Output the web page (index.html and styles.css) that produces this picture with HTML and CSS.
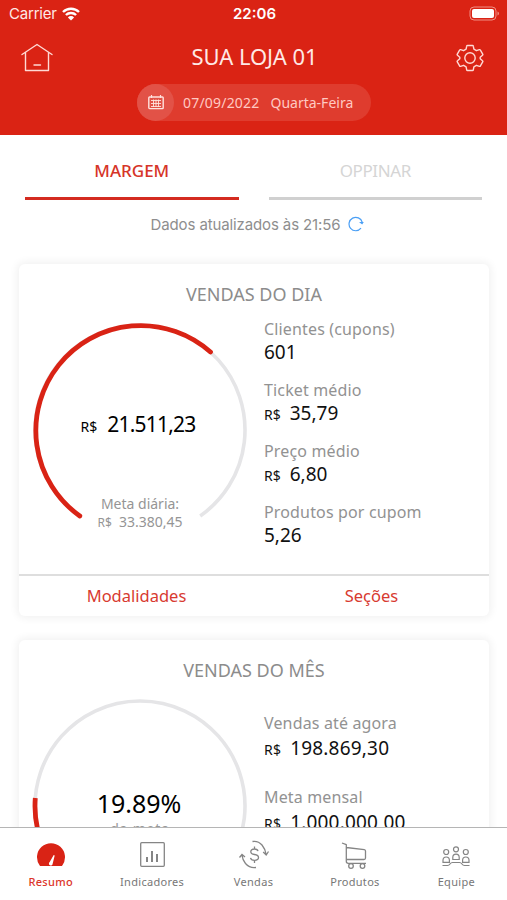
FILE: index.html
```
<!DOCTYPE html>
<html lang="pt-BR">
<head>
	<meta charset="UTF-8">
	<title>Resumo</title>
	<link rel="stylesheet" href="styles.css">
</head>
<body>
	<div id="app">
		<header>
			<div class="status">
				<div class="carrier">
					<span>Carrier</span>
					<svg width="18" height="14" viewBox="0 0 18 14" fill="none" stroke="#fff" stroke-width="2.4">
						<path d="M1 5a11.5 11.5 0 0 1 16 0"/>
						<path d="M3.9 8a7.4 7.4 0 0 1 10.2 0"/>
						<path d="M9 13.6L5.9 10.4a4.4 4.4 0 0 1 6.2 0z" fill="#fff" stroke="none"/>
					</svg>
				</div>
				<b class="clock">22:06</b>
				<svg class="battery" width="31" height="15" viewBox="0 0 31 15">
					<rect x="1" y="1" width="26" height="13" rx="4" fill="none" stroke="#f08f84"/>
					<rect x="3" y="3" width="22" height="9" rx="2" fill="#fff"/>
					<path d="M28.5 5.5v4q1.5-.6 1.5-2t-1.5-2z" fill="#f08f84"/>
				</svg>
			</div>
			<div class="title">
				<svg width="32" height="29" viewBox="0 0 32 29" fill="none" stroke="#ffd9d4" stroke-width="1.4" stroke-linejoin="round" stroke-linecap="round">
					<path d="M1 11.5L16 1.500l15 10M4.500 9.500v18h23v-18M13 22h6.500"/>
				</svg>
				<h1>SUA LOJA 01</h1>
				<svg width="28" height="28" viewBox="0 0 28 28" fill="none" stroke="#ffd9d4" stroke-width="1.4" stroke-linejoin="round">
					<circle cx="14" cy="14" r="5.2"/>
					<path d="M11.500 1.500h5q.7 0 .8.700l.6 3 2.500 1.500 3-1q.7-.2 1 .4l2.300 4q.4.700-.2 1.100l-2.300 2v1.600l2.300 2q.6.400.2 1.100l-2.300 4q-.3.600-1 .4l-3-1-2.500 1.500-.6 3q-.1.700-.8.700h-5q-.7 0-.8-.7l-.6-3-2.500-1.500-3 1q-.7.200-1-.4l-2.300-4q-.4-.7.200-1.100l2.300-2v-1.600l-2.300-2q-.6-.4-.2-1.100l2.300-4q.3-.6 1-.4l3 1 2.500-1.500.6-3q.1-.7.8-.7z"/>
				</svg>
			</div>
			<div class="date">
				<span class="cal">
					<svg width="16" height="15" viewBox="0 0 16 15" fill="none" stroke="#ffe2de">
						<rect x=".8" y="2" width="14.4" height="11.6" rx=".8" stroke-width="1.4"/>
						<path d="M3.500 0v3M12.500 0v3" stroke-width="1.2"/>
						<path d="M3 5.500h10M3 8.500h10M3 11.500h10M5.500 4.500v7.500M8 4.500v7.500M10.500 4.500v7.500" stroke-width=".9"/>
					</svg>
				</span>
				<span>07/09/2022</span>
				<span class="week">Quarta-Feira</span>
			</div>
		</header>

		<nav class="tabs">
			<a class="choose">MARGEM</a>
			<a>OPPINAR</a>
		</nav>

		<p class="updated">
			<span>Dados atualizados às 21:56</span>
			<svg width="16" height="16" viewBox="0 0 16 16" fill="none" stroke="#4a9ff5" stroke-width="1.2">
				<path d="M13 12.200A6.700 6.700 0 1 1 14.200 6.200"/>
				<path d="M11 6h4.800l-1.600 2.500z" fill="#4a9ff5" stroke="none"/>
			</svg>
		</p>

		<section class="card">
			<h2>VENDAS DO DIA</h2>
			<div class="body">
				<div class="gauge">
					<svg width="216" height="216" viewBox="0 0 216 216" fill="none">
						<path d="M47.800 194A105 105 0 1 1 168.200 194" stroke="#e5e5e7" stroke-width="3.6"/>
						<path d="M47.800 194A105 105 0 1 1 178.500 30" stroke="#d92315" stroke-width="4.8" stroke-linecap="round"/>
					</svg>
					<p class="total"><small>R$</small>21.511,23</p>
					<p class="meta">Meta diária:<br><small>R$</small>33.380,45</p>
				</div>
				<dl>
					<dt>Clientes (cupons)</dt>
					<dd>601</dd>
					<dt>Ticket médio</dt>
					<dd><small>R$</small>35,79</dd>
					<dt>Preço médio</dt>
					<dd><small>R$</small>6,80</dd>
					<dt>Produtos por cupom</dt>
					<dd>5,26</dd>
				</dl>
			</div>
			<div class="links">
				<a>Modalidades</a>
				<a>Seções</a>
			</div>
		</section>

		<section class="card">
			<h2>VENDAS DO MÊS</h2>
			<div class="body">
				<div class="gauge">
					<svg width="216" height="216" viewBox="0 0 216 216" fill="none">
						<path d="M47.800 194A105 105 0 1 1 168.200 194" stroke="#e5e5e7" stroke-width="3.6"/>
						<path d="M47.800 194A105 105 0 0 1 3.300 100" stroke="#d92315" stroke-width="4.8"/>
					</svg>
					<p class="percent">19.89%</p>
					<p class="of">da meta</p>
				</div>
				<dl class="month">
					<dt>Vendas até agora</dt>
					<dd><small>R$</small>198.869,30</dd>
					<dt>Meta mensal</dt>
					<dd><small>R$</small>1.000.000,00</dd>
				</dl>
			</div>
		</section>

		<footer>
			<a class="choose">
				<svg width="32" height="30" viewBox="0 0 32 30">
					<path d="M4.700 25.500A14 14 0 1 1 27.300 25.500Q27 26 26 26H6Q5 26 4.700 25.500z" fill="#d92315"/>
					<path d="M18.700 15l1 .4-2 8.200a1.900 1.900 0 1 1-3-1.500z" fill="#fff"/>
				</svg>
				<span>Resumo</span>
			</a>
			<a>
				<svg width="32" height="30" viewBox="0 0 32 30" fill="none" stroke="#858585">
					<rect x="4.700" y="2.700" width="23.600" height="23.600" rx="1" stroke-width="1.3"/>
					<path d="M11 17v5M16 11v11M21 14v8" stroke-width="2"/>
				</svg>
				<span>Indicadores</span>
			</a>
			<a>
				<svg width="32" height="30" viewBox="0 0 32 30" fill="none" stroke="#858585" stroke-width="1.3">
					<path d="M14.500 1.500Q20 .500 24 5 27.200 9 28 14M25.200 12l3 3 2.300-3.500"/>
					<path d="M18 27.500Q12 28.500 7.500 23.500 4.500 20 4 15M1.500 17.500l2.500-3 3 2.500"/>
					<path d="M20 11.200Q19.500 9 16.500 9 12.800 9 12.800 11.700 12.800 14 16.500 14.500 20.500 15 20.500 17.500 20.500 20.300 16.500 20.300 13 20.300 12.500 17.800M16.500 6.500V9M16.500 20.300v2.700"/>
				</svg>
				<span>Vendas</span>
			</a>
			<a>
				<svg width="32" height="30" viewBox="0 0 32 30" fill="none" stroke="#858585" stroke-width="1.3" stroke-linejoin="round">
					<path d="M3 3l4.300 1.700v16.600q0 2 2 2h17.700M7.300 7.500l18 2.200q1.200.2 1.200 1.300v7q0 1.500-1.500 1.500H7.300"/>
					<circle cx="12" cy="26" r="2.3"/>
					<circle cx="23.5" cy="26" r="2.3"/>
				</svg>
				<span>Produtos</span>
			</a>
			<a>
				<svg width="32" height="30" viewBox="0 0 32 30" fill="none" stroke="#858585" stroke-width="1.2">
					<circle cx="6.2" cy="12" r="2.5"/>
					<circle cx="16" cy="9.3" r="2.5"/>
					<circle cx="25.8" cy="12" r="2.5"/>
					<path d="M3 22.300v-2q0-3.300 3.200-3.300t3.200 3.300v2zM12.800 19.500v-2q0-3.300 3.200-3.300t3.200 3.300v2zM22.600 22.300v-2q0-3.300 3.200-3.300t3.200 3.300v2z"/>
					<path d="M2.500 25.500h5q1.500 0 2.500-1.500t2.500-1.500h7q1.500 0 2.500 1.500t2.500 1.500h5"/>
				</svg>
				<span>Equipe</span>
			</a>
		</footer>
	</div>
</body>
</html>
```
FILE: styles.css
```
*{
	box-sizing: border-box;
	margin: 0;
	padding: 0;
}
body{
	font-family: "Noto Sans",sans-serif;
	background: #fff;
	color: #111;
}
#app{
	width: 507px;
	height: 900px;
	overflow: hidden;
	position: relative;
}
svg{
	display: block;
	flex: none;
}
header{
	height: 135px;
	background: #da2314;
	color: #ffe9e6;
}
.status{
	height: 27px;
	padding: 0 7px 0 9px;
	display: grid;
	grid-template-columns: 1fr auto 1fr;
	align-items: center;
	font: 15px/27px Inter,sans-serif;
}
.carrier{
	display: flex;
	gap: 5px;
	align-items: center;
	letter-spacing: -.2px;
}
.clock{
	color: #fff;
	font-weight: 600;
}
.battery{
	justify-self: end;
}
.title{
	height: 57px;
	padding: 4px 23px 0 21px;
	display: flex;
	justify-content: space-between;
	align-items: center;
}
h1{
	font-size: 22px;
	font-weight: 400;
	line-height: 30px;
	letter-spacing: -.1px;
	padding-bottom: 3px;
}
.date{
	width: 234px;
	height: 37px;
	margin-left: 137px;
	border-radius: 19px;
	background: #df3c2e;
	color: #ffc9c2;
	font-size: 14px;
	letter-spacing: .2px;
	display: flex;
	align-items: center;
}
.cal{
	width: 37px;
	height: 37px;
	border-radius: 50%;
	background: #e25247;
	display: flex;
	align-items: center;
	justify-content: center;
	margin-right: 9px;
}
.week{
	margin-left: 11px;
	letter-spacing: 0;
}
.tabs{
	display: flex;
	gap: 30px;
	padding: 0 25px;
}
.tabs a{
	width: 214px;
	height: 65px;
	line-height: 71px;
	text-align: center;
	font-size: 17px;
	letter-spacing: -.4px;
	color: #d5d5d5;
	border-bottom: 3px solid #d0d0d0;
}
.tabs .choose{
	color: #d63428;
	font-weight: 500;
	letter-spacing: 0;
	border-color: #d42b20;
}
.updated{
	height: 48px;
	padding-left: 8px;
	display: flex;
	justify-content: center;
	align-items: center;
	gap: 8px;
	font: 15px Inter,sans-serif;
	letter-spacing: -.12px;
	color: #8e8e8e;
}
.card{
	width: 470px;
	margin: 16px 0 0 19px;
	border-radius: 6px;
	box-shadow: 0 0 8px 2px rgba(0,0,0,.06);
}
.card + .card{
	margin-top: 24px;
	height: 352px;
}
h2{
	height: 52px;
	padding-top: 5px;
	line-height: 50px;
	text-align: center;
	font-size: 18px;
	font-weight: 400;
	color: #8c8c8c;
}
.body{
	height: 258px;
	display: flex;
}
.gauge{
	width: 216px;
	height: 216px;
	margin: 6px 16px 0 13px;
	position: relative;
	text-align: center;
}
.gauge p{
	position: absolute;
	left: 0;
	width: 100%;
}
.gauge .total{
	top: 87px;
	left: -2px;
	font-size: 21px;
	line-height: 30px;
	letter-spacing: -.8px;
	color: #000;
}
.total small{
	font-size: 14px;
	letter-spacing: 0;
	margin-right: 10px;
}
.meta{
	top: 173px;
	font-size: 14px;
	line-height: 18px;
	color: #959595;
}
.meta small{
	font-size: 12px;
	margin-right: 7px;
}
.gauge .percent{
	top: 90px;
	left: -1px;
	font-size: 25px;
	line-height: 30px;
	color: #000;
}
.of{
	top: 121px;
	font-size: 14px;
	line-height: 20px;
	letter-spacing: .8px;
	color: #999;
}
dt{
	font-size: 16px;
	line-height: 24px;
	letter-spacing: .15px;
	color: #929292;
}
dd{
	font-size: 19px;
	line-height: 23px;
	height: 37px;
}
dd small{
	font-size: 14px;
	margin-right: 9px;
}
dl{
	padding-top: 1px;
}
.month{
	padding-top: 19px;
}
.month dd{
	height: 50px;
	padding-top: 2px;
	letter-spacing: .2px;
}
.links{
	height: 42px;
	border-top: 2px solid #dedede;
	display: flex;
	line-height: 40px;
	font-size: 16.5px;
	color: #d83a30;
}
.links a{
	width: 50%;
	text-align: center;
}
footer{
	position: absolute;
	left: 0;
	bottom: 0;
	width: 507px;
	height: 73px;
	padding-top: 12px;
	background: #fff;
	border-top: 1px solid #b5b5b5;
	display: flex;
}
footer a{
	flex: 1;
	display: flex;
	flex-direction: column;
	align-items: center;
	font-size: 11px;
	line-height: 24px;
	letter-spacing: .3px;
	color: #777;
}
footer .choose{
	color: #dc3529;
	font-weight: 500;
}
```
